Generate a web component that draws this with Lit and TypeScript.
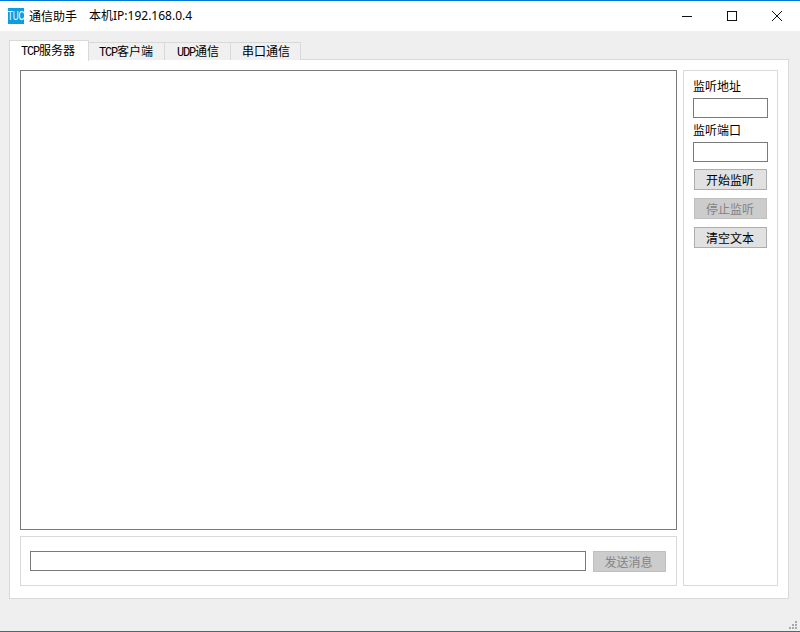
import { LitElement, html, css } from "lit";
import { customElement } from "lit/decorators.js";

@customElement("app-root")
export class AppRoot extends LitElement {
  static styles = css`
    :host { display: block; width: 800px; height: 632px; overflow: hidden; }
    * { box-sizing: border-box; }
    .window {
      width: 800px; height: 632px; display: flex; flex-direction: column;
      background: #efefef; border-top: 1px solid #0078d7; border-bottom: 1px solid #1a73c0;
      font: 12px/16px "Noto Sans CJK SC", "Noto Sans", sans-serif; color: #000; position: relative;
    }
    .titlebar { height: 30px; flex: none; background: #fff; display: flex; align-items: center; padding-left: 8px; }
    .logo {
      width: 16px; height: 16px; background: #0aa0e0; margin-right: 5px; margin-top: -1px;
      flex: none; display: flex; justify-content: center;
    }
    .logo span {
      color: #fff; font: 12px/16px "Liberation Sans", sans-serif; letter-spacing: -0.2px;
      transform: scaleX(0.68); white-space: nowrap; flex: none;
    }
    .app { font-size: 12px; margin-right: 12px; margin-top: -1px; }
    .ip { font-size: 12px; font-family: "Noto Sans", "Noto Sans CJK SC", sans-serif; margin-top: -1px; }
    .controls { margin-left: auto; display: flex; padding-right: 1px; }
    .ctl { width: 45px; height: 30px; display: flex; align-items: center; justify-content: center; margin-top: -1px; }
    .ctl svg { display: block; width: 12px; height: 12px; }
    .body { flex: 1; padding: 9px 11px 0 9px; display: flex; flex-direction: column; }
    .tabs { display: flex; height: 20px; align-items: flex-end; position: relative; z-index: 1; }
    .tab {
      height: 18px; padding: 0 11px; margin-left: -1px; border: 1px solid #d9d9d9; border-bottom: none;
      background: #f0f0f0; font-size: 12px; line-height: 15px; white-space: nowrap;
      font-family: "Liberation Mono", "Noto Sans CJK SC", monospace; letter-spacing: -1.2px;
    }
    .tab .cjk { font-family: "Noto Sans CJK SC", sans-serif; letter-spacing: 0; }
    .tab.first { margin-left: 0; }
    .tab.active {
      width: 80px; background: #fff; padding: 0 0 0 11px; border-color: #d9d9d9;
      margin-bottom: -1px; height: 21px; line-height: 18px;
    }
    .tab.w2 { width: 77px; padding-left: 10px; }
    .tab.w3 { width: 67px; padding-left: 12px; }
    .tab.w4 { width: 71px; padding-left: 11px; }
    .pane {
      width: 780px; height: 540px; background: #fff; border: 1px solid #d9d9d9; margin-top: -1px;
      padding: 10px; display: flex; gap: 6px;
    }
    .main { width: 657px; display: flex; flex-direction: column; gap: 6px; }
    .log { height: 460px; border: 1px solid #7a7a7a; background: #fff; }
    .sendbox {
      height: 50px; border: 1px solid #d9d9d9; display: flex; align-items: flex-start;
      padding: 14px 0 0 9px; gap: 7px;
    }
    input { border: 1px solid #7a7a7a; background: #fff; padding: 0; margin: 0; outline: none; display: block; }
    .sendinput { width: 556px; height: 20px; }
    button {
      display: block; width: 73px; height: 21px; padding: 0 1px 0 0; margin: 0;
      background: #e1e1e1; border: 1px solid #adadad; font: inherit; color: #000; border-radius: 0;
    }
    button:disabled { background: #ccc; border-color: #bfbfbf; color: #838383; }
    .sendbox button { padding-right: 2px; }
    .side {
      width: 95px; height: 516px; border: 1px solid #d9d9d9; padding: 6px 0 0 9px;
      display: flex; flex-direction: column;
    }
    label { display: block; height: 21px; line-height: 18px; }
    .side input { width: 75px; height: 20px; }
    .side label.second { margin-top: 3px; }
    .side button { margin-left: 1px; }
    .side .b1 { margin-top: 7px; }
    .side .b2 { margin-top: 8px; }
    .grip { position: absolute; right: 2px; bottom: 1px; width: 10px; height: 10px; }
  `;

  render() {
    return html`
      <div class="window">
        <div class="titlebar">
          <div class="logo"><span>TUC</span></div>
          <span class="app">通信助手</span>
          <span class="ip">本机IP:192.168.0.4</span>
          <div class="controls">
            <div class="ctl"><svg viewBox="0 0 12 12"><path d="M1 6.5h10" stroke="#111" fill="none"/></svg></div>
            <div class="ctl"><svg viewBox="0 0 12 12"><rect x="1.5" y="1.5" width="9" height="9" stroke="#111" fill="none"/></svg></div>
            <div class="ctl"><svg viewBox="0 0 12 12"><path d="M1 1l10 10M11 1L1 11" stroke="#111" fill="none"/></svg></div>
          </div>
        </div>
        <div class="body">
          <div class="tabs">
            <div class="tab first active">TCP<span class="cjk">服务器</span></div>
            <div class="tab w2">TCP<span class="cjk">客户端</span></div>
            <div class="tab w3">UDP<span class="cjk">通信</span></div>
            <div class="tab w4"><span class="cjk">串口通信</span></div>
          </div>
          <div class="pane">
            <div class="main">
              <div class="log"></div>
              <div class="sendbox">
                <input class="sendinput" />
                <button disabled>发送消息</button>
              </div>
            </div>
            <div class="side">
              <label>监听地址</label>
              <input />
              <label class="second">监听端口</label>
              <input />
              <button class="b1">开始监听</button>
              <button class="b2" disabled>停止监听</button>
              <button class="b2">清空文本</button>
            </div>
          </div>
        </div>
        <svg class="grip" viewBox="0 0 10 10" fill="#a8a8a8">
          <rect x="7" y="1" width="2" height="2"/>
          <rect x="4" y="4" width="2" height="2"/><rect x="7" y="4" width="2" height="2"/>
          <rect x="1" y="7" width="2" height="2"/><rect x="4" y="7" width="2" height="2"/><rect x="7" y="7" width="2" height="2"/>
        </svg>
      </div>
    `;
  }
}
